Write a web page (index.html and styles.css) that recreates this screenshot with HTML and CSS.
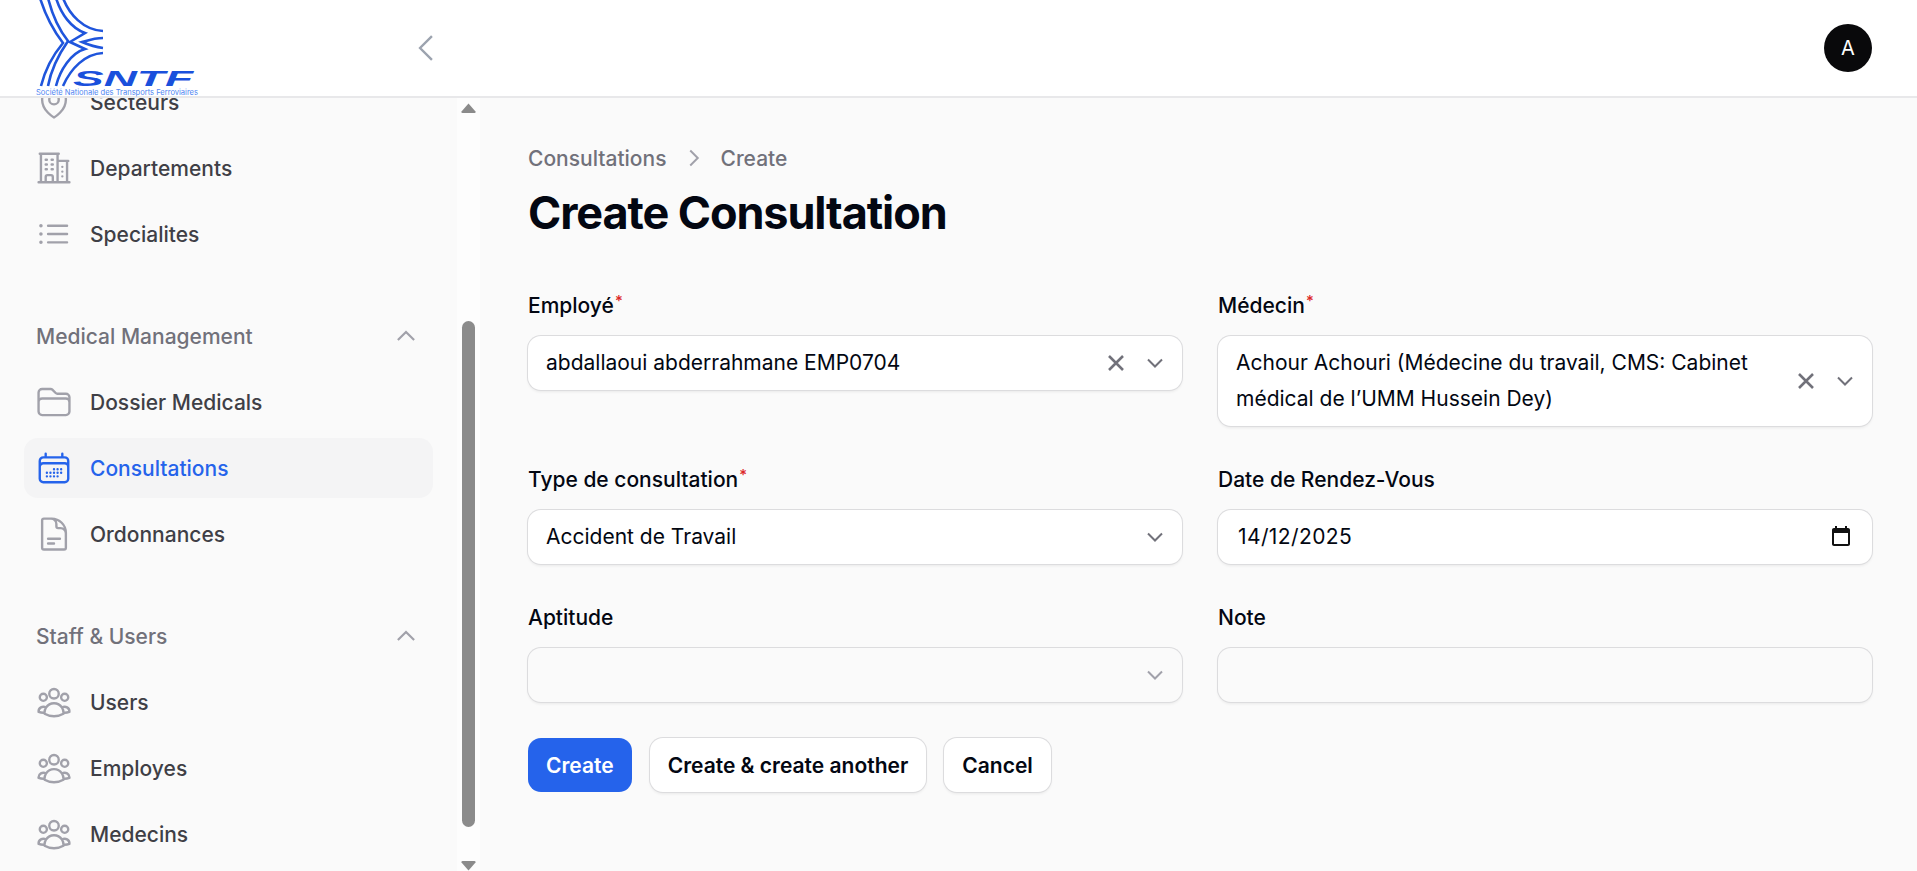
FILE: index.html
```html
<!DOCTYPE html>
<html lang="fr">
<head>
<meta charset="utf-8">
<title>Create Consultation</title>
<link rel="stylesheet" href="styles.css">
</head>
<body>
<svg class="sprite" xmlns="http://www.w3.org/2000/svg" aria-hidden="true">
  <symbol id="i-pin" viewBox="0 0 24 24"><path d="M15 10.5a3 3 0 1 1-6 0 3 3 0 0 1 6 0Z"/><path d="M19.5 10.5c0 7.142-7.5 11.25-7.5 11.25S4.5 17.642 4.5 10.5a7.5 7.5 0 1 1 15 0Z"/></symbol>
  <symbol id="i-building" viewBox="0 0 24 24"><path d="M2.25 21h19.5m-18-18v18m10.5-18v18m6-13.5V21M6.75 6.75h.75m-.75 3h.75m-.75 3h.75m3-6h.75m-.75 3h.75m-.75 3h.75M6.75 21v-3.375c0-.621.504-1.125 1.125-1.125h2.25c.621 0 1.125.504 1.125 1.125V21M3 3h12m-.75 4.5H21m-3.75 3.75h.008v.008h-.008v-.008Zm0 3h.008v.008h-.008v-.008Zm0 3h.008v.008h-.008v-.008Z"/></symbol>
  <symbol id="i-list" viewBox="0 0 24 24"><path d="M8.25 6.75h12M8.25 12h12m-12 5.25h12M3.75 6.75h.007v.008H3.75V6.75Zm.375 0a.375.375 0 1 1-.75 0 .375.375 0 0 1 .75 0ZM3.75 12h.007v.008H3.75V12Zm.375 0a.375.375 0 1 1-.75 0 .375.375 0 0 1 .75 0Zm-.375 5.25h.007v.008H3.75v-.008Zm.375 0a.375.375 0 1 1-.75 0 .375.375 0 0 1 .75 0Z"/></symbol>
  <symbol id="i-folder" viewBox="0 0 24 24"><path d="M2.25 12.75V12A2.25 2.25 0 0 1 4.5 9.75h15A2.25 2.25 0 0 1 21.75 12v.75m-8.69-6.44-2.12-2.12a1.5 1.5 0 0 0-1.061-.44H4.5A2.25 2.25 0 0 0 2.25 6v12a2.25 2.25 0 0 0 2.25 2.25h15A2.25 2.25 0 0 0 21.75 18V9a2.25 2.25 0 0 0-2.25-2.25h-5.379a1.5 1.5 0 0 1-1.06-.44Z"/></symbol>
  <symbol id="i-calendar" viewBox="0 0 24 24"><path d="M6.75 3v2.25M17.25 3v2.25M3 18.75V7.5a2.25 2.25 0 0 1 2.25-2.25h13.5A2.25 2.25 0 0 1 21 7.5v11.25m-18 0A2.25 2.25 0 0 0 5.25 21h13.5A2.25 2.25 0 0 0 21 18.75m-18 0v-7.5A2.25 2.25 0 0 1 5.25 9h13.5A2.25 2.25 0 0 1 21 11.25v7.5m-9-6h.008v.008H12v-.008ZM12 15h.008v.008H12V15Zm0 2.25h.008v.008H12v-.008ZM9.75 15h.008v.008H9.75V15Zm0 2.25h.008v.008H9.75v-.008ZM7.5 15h.008v.008H7.5V15Zm0 2.25h.008v.008H7.5v-.008Zm6.75-4.5h.008v.008h-.008v-.008Zm0 2.25h.008v.008h-.008V15Zm0 2.25h.008v.008h-.008v-.008Zm2.25-4.5h.008v.008H16.5v-.008Zm0 2.25h.008v.008H16.5V15Z"/></symbol>
  <symbol id="i-doc" viewBox="0 0 24 24"><path d="M19.5 14.25v-2.625a3.375 3.375 0 0 0-3.375-3.375h-1.5A1.125 1.125 0 0 1 13.5 7.125v-1.5a3.375 3.375 0 0 0-3.375-3.375H8.25m0 12.75h7.5m-7.5 3H12M10.5 2.25H5.625c-.621 0-1.125.504-1.125 1.125v17.25c0 .621.504 1.125 1.125 1.125h12.75c.621 0 1.125-.504 1.125-1.125V11.25a9 9 0 0 0-9-9Z"/></symbol>
  <symbol id="i-users" viewBox="0 0 24 24"><path d="M18 18.72a9.094 9.094 0 0 0 3.741-.479 3 3 0 0 0-4.682-2.72m.94 3.198.001.031c0 .225-.012.447-.037.666A11.944 11.944 0 0 1 12 21c-2.17 0-4.207-.576-5.963-1.584A6.062 6.062 0 0 1 6 18.719m12 0a5.971 5.971 0 0 0-.941-3.197m0 0A5.995 5.995 0 0 0 12 12.75a5.995 5.995 0 0 0-5.058 2.772m0 0a3 3 0 0 0-4.681 2.72 8.986 8.986 0 0 0 3.74.477m.94-3.197a5.971 5.971 0 0 0-.94 3.197M15 6.75a3 3 0 1 1-6 0 3 3 0 0 1 6 0Zm6 2.25a2.25 2.25 0 1 1-4.5 0 2.25 2.25 0 0 1 4.5 0Zm-13.5 0a2.25 2.25 0 1 1-4.5 0 2.25 2.25 0 0 1 4.5 0Z"/></symbol>
  <symbol id="i-up" viewBox="0 0 24 24"><path d="m4.5 15.75 7.5-7.5 7.5 7.5"/></symbol>
  <symbol id="i-down" viewBox="0 0 24 24"><path d="m5 8.5 7 7 7-7"/></symbol>
  <symbol id="i-x" viewBox="0 0 24 24"><path d="M6 18 18 6M6 6l12 12"/></symbol>
</svg>

<div class="app">
  <header class="topbar">
    <div class="brand">
      <svg class="logo" viewBox="0 0 170 97" width="170" height="97" xmlns="http://www.w3.org/2000/svg" role="img" aria-label="SNTF">
        <g class="logo-lines">
          <path d="M5 -2C10 14 18 30 28 43C18 55 10 70 6 86"/>
          <path d="M13 -2C17 14 25 31 33 41C24 54 16 70 13 86"/>
          <path d="M21 -2C26 14 36 28 50 33L35 42L50 49C36 53 25 70 21 86"/>
          <path d="M28 -2C34 14 48 30 68 31"/>
          <path d="M68 38C60 38 54 40 47 42C54 45 60 47 68 48"/>
          <path d="M28 86C36 68 50 54 68 53"/>
        </g>
        <text class="logo-name" x="38" y="86" textLength="120" lengthAdjust="spacingAndGlyphs">SNTF</text>
        <text class="logo-sub" x="1" y="95" textLength="162" lengthAdjust="spacingAndGlyphs">Société Nationale des Transports Ferroviaires</text>
      </svg>
      <button class="collapse" type="button" aria-label="Collapse sidebar">
        <svg class="ico-collapse" viewBox="0 0 24 24"><path d="M15.75 19.5 8.25 12l7.5-7.5"/></svg>
      </button>
    </div>
    <div class="avatar">A</div>
  </header>

  <div class="body">
    <aside class="sidebar">
      <nav class="nav">
        <ul class="nav-scroll">
          <li>
            <ul class="group-items">
              <li class="item"><svg class="ico"><use href="#i-pin"/></svg><span>Secteurs</span></li>
              <li class="item"><svg class="ico"><use href="#i-building"/></svg><span>Departements</span></li>
              <li class="item"><svg class="ico"><use href="#i-list"/></svg><span>Specialites</span></li>
            </ul>
          </li>
          <li>
            <div class="group-head"><span>Medical Management</span><svg class="ico-up"><use href="#i-up"/></svg></div>
            <ul class="group-items">
              <li class="item"><svg class="ico"><use href="#i-folder"/></svg><span>Dossier Medicals</span></li>
              <li class="item active"><svg class="ico"><use href="#i-calendar"/></svg><span>Consultations</span></li>
              <li class="item"><svg class="ico"><use href="#i-doc"/></svg><span>Ordonnances</span></li>
            </ul>
          </li>
          <li>
            <div class="group-head"><span>Staff &amp; Users</span><svg class="ico-up"><use href="#i-up"/></svg></div>
            <ul class="group-items">
              <li class="item"><svg class="ico"><use href="#i-users"/></svg><span>Users</span></li>
              <li class="item"><svg class="ico"><use href="#i-users"/></svg><span>Employes</span></li>
              <li class="item"><svg class="ico"><use href="#i-users"/></svg><span>Medecins</span></li>
            </ul>
          </li>
        </ul>
      </nav>
      <div class="scrollbar" aria-hidden="true">
        <svg class="sb-arrow" viewBox="0 0 15 10"><path d="M7.5 .5 14.5 8.5Q15 10 13.5 10H1.500Q0 10 .5 8.500Z"/></svg>
        <div class="sb-thumb"></div>
        <svg class="sb-arrow sb-down" viewBox="0 0 15 10"><path d="M7.5 9.500 14.500 1.500Q15 0 13.500 0H1.500Q0 0 .5 1.500Z"/></svg>
      </div>
    </aside>

    <main class="main">
      <ol class="crumbs">
        <li>Consultations</li>
        <li class="crumb-sep"><svg viewBox="0 0 24 24"><path d="m8.25 4.500 7.500 7.500-7.500 7.500"/></svg></li>
        <li>Create</li>
      </ol>
      <h1 class="title">Create Consultation</h1>

      <form class="form">
        <div class="field">
          <div class="label">Employé<sup class="req">*</sup></div>
          <div class="control">
            <div class="value">abdallaoui abderrahmane EMP0704</div>
            <svg class="ctl-x"><use href="#i-x"/></svg>
            <svg class="ctl-chev"><use href="#i-down"/></svg>
          </div>
        </div>
        <div class="field">
          <div class="label">Médecin<sup class="req">*</sup></div>
          <div class="control">
            <div class="value value-wrap">Achour Achouri (Médecine du travail, CMS: Cabinet médical de l’UMM Hussein Dey)</div>
            <svg class="ctl-x"><use href="#i-x"/></svg>
            <svg class="ctl-chev"><use href="#i-down"/></svg>
          </div>
        </div>
        <div class="field">
          <div class="label">Type de consultation<sup class="req">*</sup></div>
          <div class="control">
            <div class="value">Accident de Travail</div>
            <svg class="ctl-chev"><use href="#i-down"/></svg>
          </div>
        </div>
        <div class="field">
          <div class="label">Date de Rendez-Vous</div>
          <div class="control">
            <div class="value value-date">14/12/2025</div>
            <svg class="ctl-date" viewBox="0 0 24 24"><path d="M19 3h-1V1h-2v2H8V1H6v2H5c-1.110 0-2 .9-2 2v14c0 1.100.89 2 2 2h14c1.100 0 2-.9 2-2V5c0-1.100-.9-2-2-2zm0 16H5V8h14v11z"/></svg>
          </div>
        </div>
        <div class="field">
          <div class="label">Aptitude</div>
          <div class="control control-off">
            <div class="value"></div>
            <svg class="ctl-chev ctl-chev-off"><use href="#i-down"/></svg>
          </div>
        </div>
        <div class="field">
          <div class="label">Note</div>
          <div class="control control-off">
            <div class="value"></div>
          </div>
        </div>
      </form>

      <div class="actions">
        <button class="btn btn-primary" type="button">Create</button>
        <button class="btn" type="button">Create &amp; create another</button>
        <button class="btn" type="button">Cancel</button>
      </div>
    </main>
  </div>
</div>
</body>
</html>
```
FILE: styles.css
```css
* { box-sizing: border-box; }
html, body { height: 100%; }
body {
  margin: 0;
  background: #fafafa;
  color: #030712;
  font-family: Inter, "Liberation Sans", sans-serif;
  font-size: 21px;
  overflow: hidden;
}
ul, ol { list-style: none; margin: 0; padding: 0; }
.sprite { display: none; }

.app { height: 100vh; display: flex; flex-direction: column; }

/* Top bar */
.topbar {
  position: relative;
  z-index: 2;
  height: 98px;
  flex: none;
  display: flex;
  align-items: center;
  justify-content: space-between;
  background: #fff;
  border-bottom: 2px solid #e8e8ea;
  padding-right: 45px;
}
.brand { width: 457px; height: 100%; display: flex; align-items: center; justify-content: space-between; padding: 0 12px 0 35px; }
.logo { display: block; overflow: visible; flex: none; align-self: flex-start; }
.logo-lines path { fill: none; stroke: #1f55dc; stroke-width: 2.6; }
.logo-name { font: italic 700 22px "Liberation Sans", sans-serif; fill: #1a50dc; }
.logo-sub { font: 400 7.6px Inter, sans-serif; fill: #4f86f2; }
.collapse { background: none; border: 0; padding: 0; width: 38px; height: 38px; }
.ico-collapse { display: block; width: 38px; height: 38px; fill: none; stroke: #9ca3af; stroke-width: 1.5; }
.avatar {
  width: 48px;
  height: 48px;
  border-radius: 50%;
  background: #09090b;
  color: #fff;
  font-size: 20px;
  display: flex;
  align-items: center;
  justify-content: center;
}

.body { flex: 1; min-height: 0; display: flex; }

/* Sidebar */
.sidebar { width: 480px; flex: none; display: flex; min-height: 0; }
.nav { width: 457px; overflow: hidden; background: #fafafa; }
.nav-scroll { margin-top: -26px; padding: 0 24px; display: flex; flex-direction: column; gap: 57px; }
.group-head {
  height: 30px;
  margin: 0 14px 21px 12px;
  display: flex;
  align-items: center;
  justify-content: space-between;
  color: #71717a;
  font-size: 21px;
  font-weight: 500;
}
.ico-up { width: 26px; height: 26px; fill: none; stroke: #a1a1aa; stroke-width: 2; }
.group-items { display: flex; flex-direction: column; gap: 6px; }
.item {
  height: 60px;
  padding-left: 11px;
  display: flex;
  align-items: center;
  gap: 17px;
  border-radius: 14px;
  color: #3f3f46;
  font-size: 21px;
  font-weight: 500;
}
.ico { width: 38px; height: 38px; flex: none; fill: none; stroke: #a1a1aa; stroke-width: 1.5; stroke-linecap: round; stroke-linejoin: round; }
.item.active { background: #f4f4f5; color: #2563eb; }
.item.active .ico { stroke: #2563eb; }

.scrollbar { width: 23px; background: #fdfdfd; display: flex; flex-direction: column; align-items: center; padding-top: 5px; }
.sb-arrow { width: 15px; height: 10px; flex: none; fill: #8b8b8b; }
.sb-thumb { width: 13px; height: 508px; margin-top: 208px; border-radius: 7px; background: #8b8b8b; }
.sb-down { margin-top: 34px; }

/* Main */
.main { flex: 1; min-width: 0; padding: 45px 45px 0 48px; }
.crumbs { display: flex; align-items: center; height: 30px; gap: 15px; color: #71717a; font-size: 21px; font-weight: 500; }
.crumb-sep { display: flex; }
.crumb-sep svg { width: 24px; height: 24px; fill: none; stroke: #a1a1aa; stroke-width: 2; }
.title { margin: 13px 0 0; font-size: 45px; line-height: 54px; font-weight: 700; letter-spacing: -1.1px; color: #030712; }

.form { margin-top: 51px; display: grid; grid-template-columns: 1fr 1fr; column-gap: 36px; row-gap: 39px; align-items: start; }
.label { height: 30px; line-height: 30px; margin-bottom: 15px; font-size: 21px; font-weight: 500; }
.req { color: #dc2626; font-size: 15px; line-height: 0; vertical-align: 7px; font-weight: 500; margin-left: 1px; }
.control {
  min-height: 54px;
  display: flex;
  align-items: center;
  padding: 9px 18px;
  border-radius: 13px;
  background: #fff;
  box-shadow: 0 0 0 1px #dcdcde, 0 2px 3px rgba(0, 0, 0, .07);
}
.control-off { background: #fafafa; }
.value { flex: 1; min-width: 0; font-size: 21px; line-height: 36px; padding-right: 20px; }
.value-wrap { max-width: 548px; flex: none; }
.value-date { letter-spacing: .4px; padding-left: 2px; }
.ctl-x { width: 28px; height: 28px; flex: none; margin-left: auto; fill: none; stroke: #71717a; stroke-width: 2.2; }
.ctl-chev { width: 24px; height: 24px; flex: none; margin-left: 13px; margin-right: -3px; fill: none; stroke: #71717a; stroke-width: 2; }
.ctl-chev-off { stroke: #a1a1aa; }
.ctl-date { width: 24px; height: 24px; flex: none; margin-right: 1px; fill: #111; }

.actions { margin-top: 36px; display: flex; align-items: center; gap: 18px; }
.btn {
  height: 54px;
  padding: 0 18px;
  border: 0;
  border-radius: 13px;
  background: #fff;
  color: #030712;
  font: 600 21px Inter, "Liberation Sans", sans-serif;
  box-shadow: 0 0 0 1px #dcdcde, 0 2px 3px rgba(0, 0, 0, .07);
}
.btn-primary { background: #2563eb; color: #fff; box-shadow: none; }
```
